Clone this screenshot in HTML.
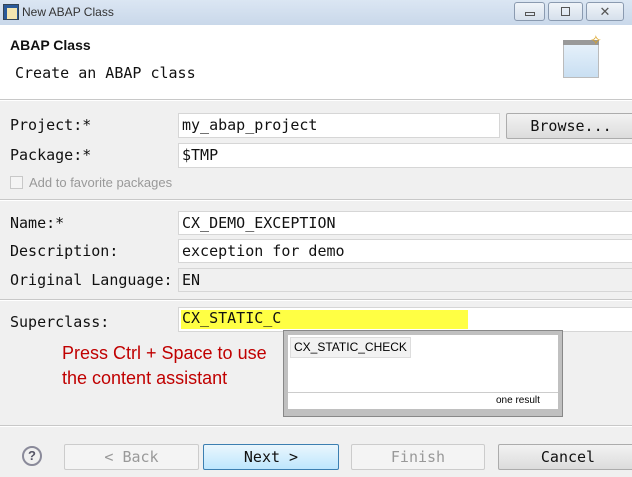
<!DOCTYPE html>
<html><head><style>
*{margin:0;padding:0;box-sizing:border-box}
body{width:632px;height:477px;overflow:hidden;background:#f0f0f0;position:relative;font-family:"Liberation Sans",sans-serif}
.a{position:absolute}
.mono{font-family:"DejaVu Sans Mono","Liberation Mono",monospace;font-size:15px;color:#111}
.in{position:absolute;background:#fff;border:1px solid #d6d6d6;height:25px;padding:2px 3px;line-height:19px}
.lbl{position:absolute;left:10px}
.sep{position:absolute;left:0;width:632px;height:2px;border-top:1px solid #c8c8c8;border-bottom:1px solid #fff}
.btn{position:absolute;top:444px;height:26px;border:1px solid #acacac;border-radius:2px;background:linear-gradient(#f2f2f2,#dcdcdc);text-align:center;line-height:24px}
</style></head><body>
<div class="a" style="left:0;top:0;width:632px;height:25px;background:linear-gradient(#dbe6f3,#c9d8ea)"></div>
<div class="a" style="left:3px;top:4px;width:16px;height:16px;background:#2a5a9a;border:1px solid #345"></div>
<div class="a" style="left:7px;top:8px;width:10px;height:11px;background:#f4e6b0"></div>
<div class="a" style="left:22px;top:5px;font-size:12px;color:#333">New ABAP Class</div>
<div class="a" style="left:514px;top:2px;width:31px;height:19px;border:1px solid #8a9ab0;border-radius:3px;background:linear-gradient(#f0f4f9,#d6e0ec)"><div class="a" style="left:10px;top:9px;width:10px;height:4px;border:1px solid #555"></div></div>
<div class="a" style="left:548px;top:2px;width:35px;height:19px;border:1px solid #8a9ab0;border-radius:3px;background:linear-gradient(#f0f4f9,#d6e0ec)"><div class="a" style="left:12px;top:4px;width:9px;height:9px;border:1px solid #555"></div></div>
<div class="a" style="left:586px;top:2px;width:38px;height:19px;border:1px solid #8a9ab0;border-radius:3px;background:linear-gradient(#f0f4f9,#d6e0ec);text-align:center;font-size:13px;line-height:17px;color:#555">✕</div>
<div class="a" style="left:0;top:25px;width:632px;height:75px;background:#fff"></div>
<div class="a" style="left:10px;top:37px;font-size:14px;font-weight:bold;color:#111">ABAP Class</div>
<div class="a mono" style="left:15px;top:64px">Create an ABAP class</div>
<div class="a" style="left:563px;top:40px;width:36px;height:38px;border:1px solid #bbb;background:linear-gradient(#e8f2fb,#c9dff2)"></div>
<div class="a" style="left:563px;top:40px;width:36px;height:5px;background:#999"></div>
<div class="a" style="left:590px;top:32px;color:#d9a020;font-size:14px">✧</div>
<div class="sep" style="top:99px"></div>
<div class="lbl mono" style="top:116px">Project:*</div>
<div class="in mono" style="left:178px;top:113px;width:322px">my_abap_project</div>
<div class="btn mono" style="left:506px;top:113px;width:130px">Browse...</div>
<div class="lbl mono" style="top:146px">Package:*</div>
<div class="in mono" style="left:178px;top:143px;width:460px">$TMP</div>
<div class="a" style="left:10px;top:176px;width:13px;height:13px;border:1px solid #c8c8c8;background:#f4f4f4"></div>
<div class="a" style="left:29px;top:175px;font-size:13px;color:#999">Add to favorite packages</div>
<div class="sep" style="top:199px"></div>
<div class="lbl mono" style="top:214px">Name:*</div>
<div class="in mono" style="left:178px;top:211px;width:460px;height:24px">CX_DEMO_EXCEPTION</div>
<div class="lbl mono" style="top:242px">Description:</div>
<div class="in mono" style="left:178px;top:239px;width:460px;height:24px">exception for demo</div>
<div class="lbl mono" style="top:271px">Original Language:</div>
<div class="in mono" style="left:178px;top:268px;width:460px;height:24px;background:#f0f0f0">EN</div>
<div class="sep" style="top:299px"></div>
<div class="lbl mono" style="top:313px">Superclass:</div>
<div class="in mono" style="left:178px;top:307px;width:460px;height:25px;padding:0"><div class="a" style="left:2px;top:2px;width:287px;height:19px;background:#ffff44"></div><span class="a" style="left:3px;top:1px">CX_STATIC_C</span></div>
<div class="a" style="left:62px;top:341px;font-size:18px;color:#c00000;line-height:25px">Press Ctrl + Space to use<br>the content assistant</div>
<div class="a" style="left:283px;top:330px;width:280px;height:87px;background:#c0c0c0;border:1px solid #888"></div>
<div class="a" style="left:288px;top:335px;width:270px;height:74px;background:#fff"></div>
<div class="a" style="left:290px;top:337px;width:121px;height:21px;border:1px solid #ddd;background:#f2f2f2;font-size:12px;line-height:19px;padding-left:3px">CX_STATIC_CHECK</div>
<div class="a" style="left:288px;top:392px;width:270px;height:1px;background:#ccc"></div>
<div class="a" style="left:496px;top:395px;font-size:10px">one result</div>
<div class="sep" style="top:425px"></div>
<div class="a" style="left:22px;top:446px;width:20px;height:20px;border-radius:50%;border:2px solid #8a8a9a;text-align:center;font-weight:bold;color:#556;font-size:13px;line-height:16px">?</div>
<div class="btn mono" style="left:64px;width:135px;color:#999;background:#f4f4f4;border-color:#ccc">&lt; Back</div>
<div class="btn mono" style="left:203px;width:136px;border-color:#3c7fb1;background:linear-gradient(#eaf6fd,#bee6fd)">Next &gt;</div>
<div class="btn mono" style="left:351px;width:134px;color:#999;background:#f4f4f4;border-color:#ccc">Finish</div>
<div class="btn mono" style="left:498px;width:140px">Cancel</div>
</body></html>
